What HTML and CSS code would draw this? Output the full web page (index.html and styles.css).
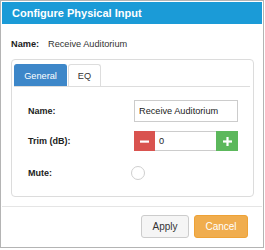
FILE: index.html
```html
<!DOCTYPE html>
<html>
<head>
<meta charset="utf-8">
<link rel="stylesheet" href="styles.css">
</head>
<body>
<div class="modal">
  <div class="header">Configure Physical Input</div>
  <div class="body">
    <div class="name-row"><span class="bold">Name:</span><span class="name-val">Receive Auditorium</span></div>
    <div class="panel">
      <div class="tabs">
        <div class="tab active">General</div>
        <div class="tab">EQ</div>
      </div>
      <div class="form">
        <div class="row r1">
          <div class="label">Name:</div>
          <div class="input wide">Receive Auditorium</div>
        </div>
        <div class="row r2">
          <div class="label">Trim (dB):</div>
          <div class="spinner">
            <div class="btn-sq minus"><svg width="9" height="9" viewBox="0 0 9 9"><rect x="0" y="3.5" width="9" height="2.2" fill="#fff"/></svg></div>
            <div class="input num">0</div>
            <div class="btn-sq plus"><svg width="9" height="9" viewBox="0 0 9 9"><rect x="0" y="3.4" width="9" height="2.2" fill="#fff"/><rect x="3.4" y="0" width="2.2" height="9" fill="#fff"/></svg></div>
          </div>
        </div>
        <div class="row r3">
          <div class="label">Mute:</div>
          <div class="radio"></div>
        </div>
      </div>
    </div>
  </div>
  <div class="footer">
    <div class="btn apply">Apply</div>
    <div class="btn cancel">Cancel</div>
  </div>
</div>
</body>
</html>
```
FILE: styles.css
```css
html, body { margin: 0; padding: 0; background: #fff; }
body { font-family: "Liberation Sans", Arial, sans-serif; color: #333; }
.modal {
  box-sizing: border-box;
  width: 264px;
  height: 248px;
  border: 1px solid #b4b4b4;
  padding: 1px;
  display: flex;
  flex-direction: column;
}
.header {
  height: 22px;
  line-height: 22px;
  background: #1b9bd7;
  color: #fff;
  font-weight: bold;
  font-size: 11px;
  padding-left: 10px;
}
.body { padding: 14px 8px 0 9px; }
.name-row { height: 12px; line-height: 12px; font-size: 9.2px; margin-bottom: 9px; display: flex; }
.bold { font-weight: bold; color: #222; width: 37px; padding-left: 0; }
.name-val { color: #333; }
.panel {
  border: 1px solid #dcdcdc;
  border-radius: 4px;
  padding: 4px 3px 13px 2px;
}
.tabs { display: flex; border-bottom: 1px solid #ddd; height: 22px; }
.tab {
  height: 22px;
  line-height: 22px;
  font-size: 9.2px;
  text-align: center;
  box-sizing: border-box;
  border: 1px solid #ddd;
  border-bottom: none;
  border-radius: 3px 3px 0 0;
  color: #333;
  width: 33px;
  margin-right: 1px;
}
.tab.active { background: #3d87c9; border-color: #3d87c9; color: #fff; width: 53px; }
.form { padding: 13px 0 0 14px; }
.row { display: flex; align-items: center; }
.r1 { height: 22px; }
.r2 { height: 20px; margin-top: 9px; }
.r3 { height: 20px; margin-top: 12px; }
.label { width: 106px; font-weight: bold; font-size: 9px; color: #222; }
.input {
  box-sizing: border-box;
  border: 1px solid #ccc;
  background: #fff;
  font-size: 9.2px;
  color: #222;
  display: flex;
  align-items: center;
}
.wide { width: 104px; height: 22px; padding-left: 4px; }
.spinner { display: flex; height: 20px; }
.num { width: 61px; height: 20px; padding-left: 4px; border-left: none; border-right: none; }
.btn-sq { width: 21px; height: 20px; display: flex; align-items: center; justify-content: center; }
.minus { background: #d9534f; }
.plus { background: #5cb85c; width: 22px; }
.radio {
  width: 14px; height: 14px; box-sizing: border-box;
  border: 1px solid #cfcfcf; border-radius: 50%;
  margin-left: -3px; background: #fff;
}
.footer {
  margin-top: 9px;
  border-top: 1px solid #e5e5e5;
  padding: 8px 14px 0 0;
  display: flex;
  justify-content: flex-end;
  gap: 5px;
}
.btn {
  box-sizing: border-box;
  height: 23px;
  line-height: 21px;
  font-size: 10px;
  text-align: center;
  border-radius: 3px;
  border: 1px solid #ccc;
}
.apply { width: 48px; background: #f5f5f5; color: #333; }
.cancel { width: 54px; background: #f0ad4e; border-color: #eea236; color: #fff; }
```
